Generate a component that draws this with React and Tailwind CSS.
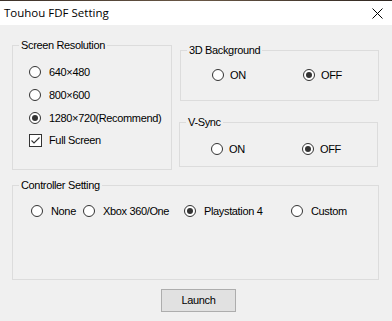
import React from 'react';

function Radio({ checked }) {
  return (
    <span className="flex h-[12px] w-[12px] shrink-0 items-center justify-center rounded-full border border-[#333] bg-white">
      {checked && <span className="h-[6px] w-[6px] rounded-full bg-[#333]" />}
    </span>
  );
}

function Option({ label, checked, gap = 'gap-[8px]', className = '' }) {
  return (
    <div className={`flex items-center leading-[12px] ${gap} ${className}`}>
      <Radio checked={checked} />
      <span className="whitespace-nowrap">{label}</span>
    </div>
  );
}

function GroupBox({ title, className = '', children }) {
  return (
    <div className={`relative border border-[#dcdcdc] ${className}`}>
      <span className="absolute -top-[7px] left-[6px] bg-[#f0f0f0] px-[2px] leading-[13px] whitespace-nowrap">
        {title}
      </span>
      {children}
    </div>
  );
}

export default function App() {
  return (
    <div className="flex h-[321px] w-[392px] flex-col font-['Liberation_Sans',Arial,sans-serif] text-[11px] tracking-[-0.35px] text-black">
      {/* strip of the desktop behind */}
      <div className="h-px bg-gradient-to-r from-[#3d3129] via-[#6a5846] to-[#2f2620]" />

      {/* Title bar */}
      <div className="flex h-[24px] items-center justify-between bg-white pl-[4px] pr-[9px]">
        <span className="font-['Open_Sans',sans-serif] text-[11.5px] tracking-normal">Touhou FDF Setting</span>
        <svg width="11" height="11" viewBox="0 0 11 11" className="text-black">
          <path d="M0.5 0.5 L10.5 10.5 M10.5 0.5 L0.5 10.5" stroke="currentColor" strokeWidth="1" fill="none" />
        </svg>
      </div>

      {/* Body */}
      <div className="flex-1 bg-[#f0f0f0] pl-[12px] pr-[13px]">
        <div className="mt-[20px] flex items-start">
          <GroupBox title="Screen Resolution" className="h-[125px] w-[160px] pl-[16px] pt-[14px]">
            <div className="flex flex-col">
              <Option className="h-[23px]" label="640×480" />
              <Option className="h-[23px]" label="800×600" />
              <Option className="h-[23px]" label="1280×720(Recommend)" checked />
              <div className="flex h-[23px] items-center gap-[7px]">
                <span className="flex h-[13px] w-[13px] shrink-0 items-center justify-center border border-[#333] bg-white">
                  <svg width="11" height="11" viewBox="0 0 11 11">
                    <path d="M1.5 5.5 L4 8 L9.5 2.5" stroke="#333" strokeWidth="1.1" fill="none" />
                  </svg>
                </span>
                <span>Full Screen</span>
              </div>
            </div>
          </GroupBox>

          <div className="ml-[8px] flex flex-col">
            <GroupBox title="3D Background" className="mt-[5px] h-[51px] w-[199px] pl-[31px] pt-[18px]">
              <div className="flex items-center">
                <Option className="w-[91px]" gap="gap-[6px]" label="ON" />
                <Option gap="gap-[6px]" label="OFF" checked />
              </div>
            </GroupBox>
            <GroupBox title="V-Sync" className="-ml-px mt-[21px] h-[45px] w-[199px] pl-[31px] pt-[20px]">
              <div className="flex items-center">
                <Option className="w-[91px]" gap="gap-[6px]" label="ON" />
                <Option gap="gap-[6px]" label="OFF" checked />
              </div>
            </GroupBox>
          </div>
        </div>

        <GroupBox title="Controller Setting" className="mt-[15px] h-[95px] w-[367px] pl-[18px] pt-[19px]">
          <div className="flex items-center">
            <Option className="w-[52px]" label="None" />
            <Option className="w-[101px]" label="Xbox 360/One" />
            <Option className="w-[107px]" label="Playstation 4" checked />
            <Option label="Custom" />
          </div>
        </GroupBox>

        <button className="ml-[149px] mt-[9px] flex h-[23px] w-[75px] items-center justify-center border border-[#adadad] bg-[#e1e1e1]">
          Launch
        </button>
      </div>
    </div>
  );
}
